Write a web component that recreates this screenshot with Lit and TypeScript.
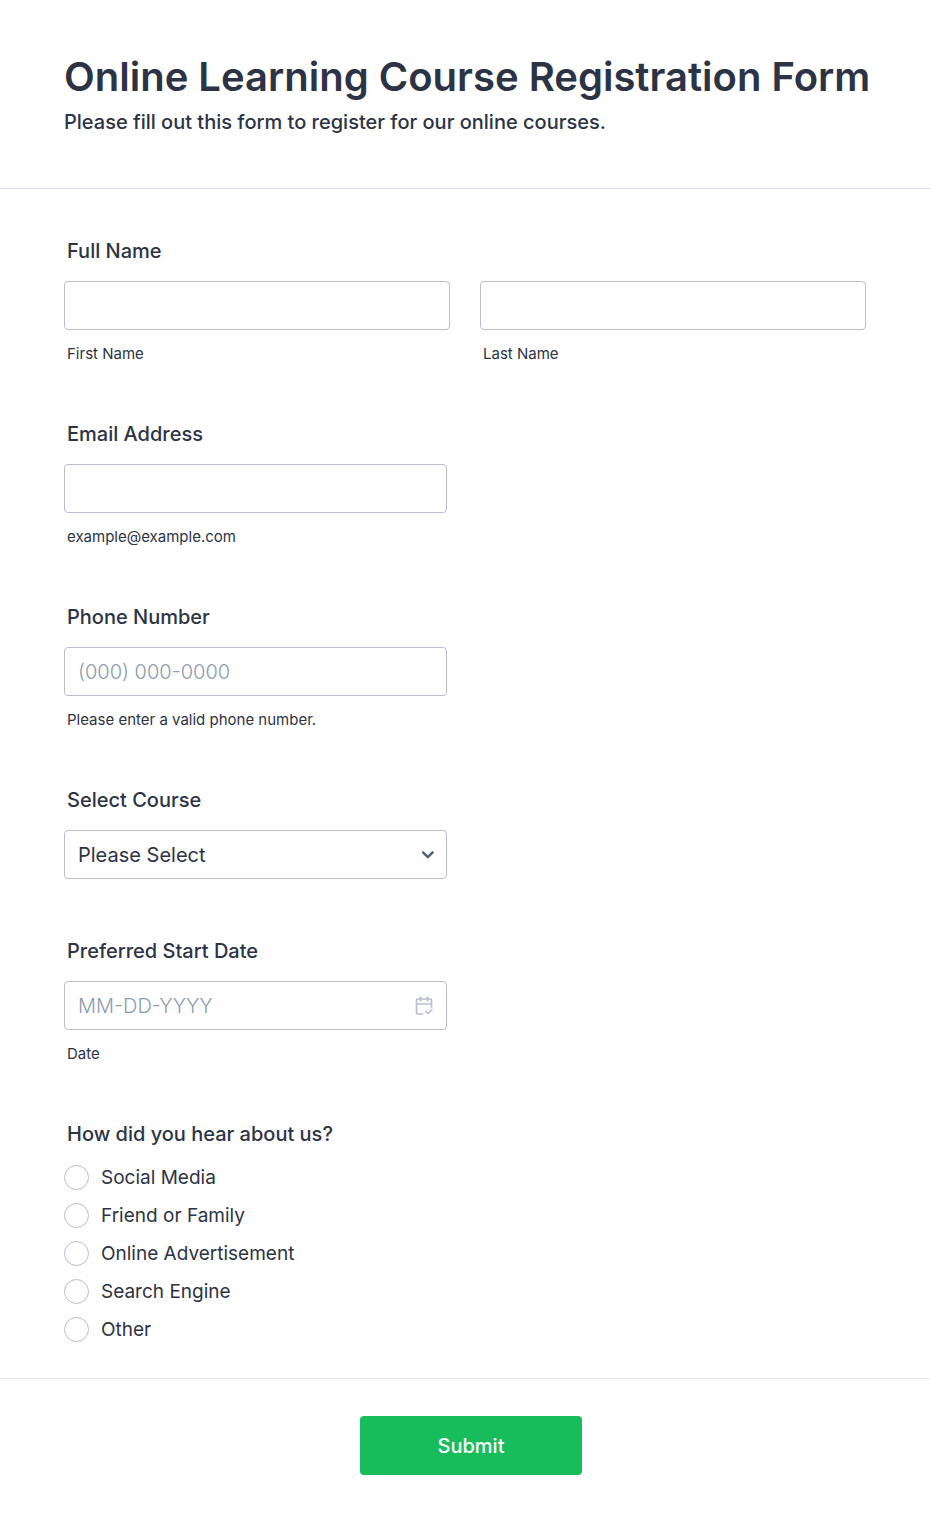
import { LitElement, html, css } from "lit";
import { customElement } from "lit/decorators.js";

const SOURCES = ["Social Media", "Friend or Family", "Online Advertisement", "Search Engine", "Other"];

@customElement("app-root")
export class AppRoot extends LitElement {
  static styles = css`
    :host {
      display: block;
      min-height: 100vh;
      background: #fff;
      color: #2c3345;
      font-family: Inter, "Liberation Sans", sans-serif;
    }
    * { box-sizing: border-box; }
    .header {
      padding: 52px 52px 54px 64px;
      border-bottom: 1px solid #d7d8e6;
    }
    .title {
      margin: 0;
      font-size: 40px;
      line-height: 50px;
      font-weight: 600;
    }
    .subtitle {
      margin: 8px 0 0;
      font-size: 20px;
      line-height: 24px;
      font-weight: 500;
    }
    .fields {
      display: flex;
      flex-direction: column;
      gap: 60px;
      padding: 50px 64px 36px;
    }
    .field {
      display: flex;
      flex-direction: column;
      max-width: 383px;
      min-width: 0;
    }
    .wide { max-width: none; }
    .label {
      padding: 0 3px;
      margin-bottom: 18px;
      font-size: 20px;
      line-height: 24px;
      font-weight: 500;
    }
    .names {
      display: grid;
      grid-template-columns: 1fr 1fr;
      gap: 30px;
    }
    .part { display: flex; flex-direction: column; }
    .control {
      width: 100%;
      height: 49px;
      padding: 0 13px;
      border: 1px solid #b9bdcd;
      border-radius: 4px;
      background: #fff;
      color: #2c3345;
      font: 400 20px/24px Inter, "Liberation Sans", sans-serif;
      appearance: none;
      outline: none;
    }
    .control::placeholder { color: #8b9bb0; font-weight: 300; opacity: 1; }
    .control:focus { border-color: #2e69ff; }
    .hint {
      padding: 0 3px;
      margin-top: 15px;
      font-size: 15px;
      line-height: 17px;
    }
    .box { position: relative; display: flex; }
    .icon {
      position: absolute;
      top: 0;
      bottom: 0;
      margin: auto 0;
      right: 12px;
      pointer-events: none;
    }
    .choices { display: flex; flex-direction: column; gap: 13px; }
    .choice {
      display: flex;
      align-items: center;
      gap: 12px;
      height: 25px;
      font-size: 19px;
      line-height: 24px;
    }
    .radio {
      appearance: none;
      width: 25px;
      height: 25px;
      margin: 0;
      border: 1px solid #b9bdcd;
      border-radius: 50%;
      background: #fff;
    }
    .radio:checked { border: 8px solid #2e69ff; }
    .question { margin-bottom: 19px; }
    .footer {
      display: flex;
      justify-content: center;
      padding: 37px 64px 50px 76px;
      border-top: 1px solid #e8eaf1;
    }
    .submit {
      width: 222px;
      height: 59px;
      border: 0;
      border-radius: 4px;
      background: #18bd5b;
      color: #fff;
      font: 500 20px/24px Inter, "Liberation Sans", sans-serif;
    }
  `;

  render() {
    return html`
      <form @submit=${(e: Event) => e.preventDefault()}>
        <header class="header">
          <h1 class="title">Online Learning Course Registration Form</h1>
          <p class="subtitle">Please fill out this form to register for our online courses.</p>
        </header>
        <div class="fields">
          <div class="field wide" role="group" aria-labelledby="name">
            <span class="label" id="name">Full Name</span>
            <div class="names">
              <div class="part">
                <input class="control" id="first" type="text" />
                <label class="hint" for="first">First Name</label>
              </div>
              <div class="part">
                <input class="control" id="last" type="text" />
                <label class="hint" for="last">Last Name</label>
              </div>
            </div>
          </div>
          <div class="field">
            <label class="label" for="email">Email Address</label>
            <input class="control" id="email" type="email" />
            <label class="hint" for="email">example@example.com</label>
          </div>
          <div class="field">
            <label class="label" for="phone">Phone Number</label>
            <input class="control" id="phone" type="tel" placeholder="(000) 000-0000" />
            <label class="hint" for="phone">Please enter a valid phone number.</label>
          </div>
          <div class="field">
            <label class="label" for="course">Select Course</label>
            <div class="box">
              <select class="control" id="course"><option>Please Select</option></select>
              <svg class="icon" width="14" height="14" viewBox="0 0 14 14" fill="none" stroke="#4f5d7a" stroke-width="2.4" stroke-linecap="round" stroke-linejoin="round"><path d="M2 4.4 6.8 9.2 11.6 4.4" /></svg>
            </div>
          </div>
          <div class="field">
            <label class="label" for="date">Preferred Start Date</label>
            <div class="box">
              <input class="control" id="date" type="text" placeholder="MM-DD-YYYY" />
              <svg class="icon" width="20" height="20" viewBox="0 0 20 20" fill="none" stroke="#babfce" stroke-width="1.7" stroke-linecap="round" stroke-linejoin="round"><path d="M7.5 18H3A1.5 1.5 0 0 1 1.5 16.5V4.5A1.5 1.5 0 0 1 3 3h12A1.5 1.5 0 0 1 16.5 4.5V11M1.5 8h15M5.5 1v4M12.5 1v4M11 15.5l2 2 4-4" /></svg>
            </div>
            <label class="hint" for="date">Date</label>
          </div>
          <div class="field" role="radiogroup" aria-labelledby="source">
            <span class="label question" id="source">How did you hear about us?</span>
            <div class="choices">
              ${SOURCES.map((s) => html`<label class="choice"><input class="radio" type="radio" name="source" value=${s} />${s}</label>`)}
            </div>
          </div>
        </div>
        <footer class="footer"><button class="submit" type="submit">Submit</button></footer>
      </form>
    `;
  }
}
